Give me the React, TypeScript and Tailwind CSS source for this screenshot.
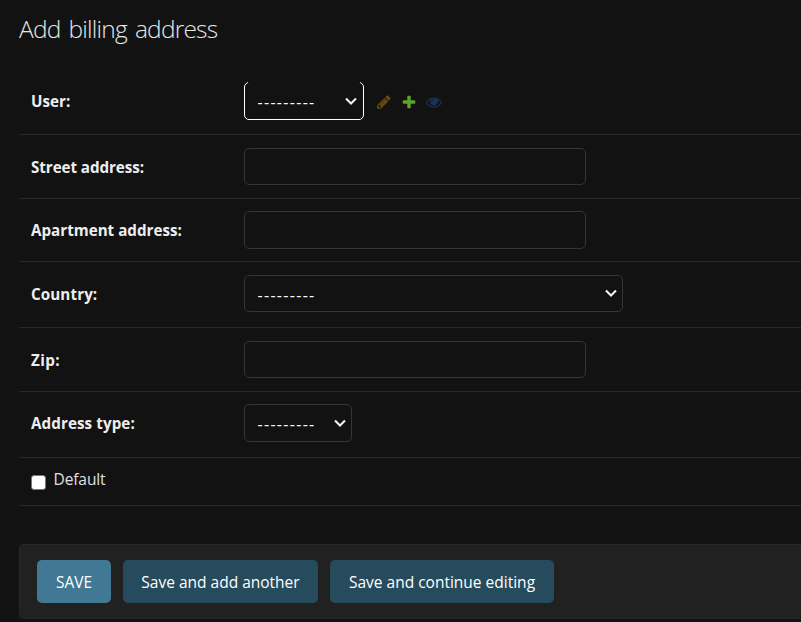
import type { ReactNode } from "react";

function Chevron() {
  return (
    <svg className="h-[9px] w-[14px] shrink-0" viewBox="0 0 14 9" fill="none">
      <path d="M2 1.6 L7 6.6 L12 1.6" stroke="#f2f2f2" strokeWidth="2.1" />
    </svg>
  );
}

function Dashes() {
  return <span className="pt-[2px] text-[16px] leading-5 tracking-[1.3px] text-white">---------</span>;
}

function Select({ className, children }: { className: string; children?: ReactNode }) {
  return (
    <div className={`relative flex items-center justify-between rounded-[5px] border pl-[12.5px] ${className}`}>
      <Dashes />
      <Chevron />
      {children}
    </div>
  );
}

function TextInput({ className }: { className: string }) {
  return <input type="text" className={`w-[342px] rounded-[5px] border border-[#353535] bg-[#121212] outline-none ${className}`} />;
}

function Row({ label, labelClass, className, children }: { label: string; labelClass: string; className: string; children: ReactNode }) {
  return (
    <div className={`flex items-start border-b border-[#282828] pl-3 ${className}`}>
      <label className={`w-[213px] shrink-0 whitespace-nowrap pt-2 text-[15.2px] font-bold leading-[22px] text-[#eeeeee] ${labelClass}`}>{label}</label>
      {children}
    </div>
  );
}

function Icon({ color, d }: { color: string; d: string }) {
  return (
    <svg className={`size-4 ${color}`} viewBox="0 0 1792 1792" fill="currentColor">
      <path d={d} />
    </svg>
  );
}

const PENCIL =
  "M491 1536l91-91-235-235-91 91v107h128v128h107zm523-928q0-22-22-22-10 0-17 7l-542 542q-7 7-7 17 0 22 22 22 10 0 17-7l542-542q7-7 7-17zm-54-192l416 416-832 832h-416v-416zm683 96q0 53-37 90l-166 166-416-416 166-165q36-38 90-38 53 0 91 38l235 234q37 39 37 91z";
const PLUS =
  "M1600 796v192q0 40-28 68t-68 28h-416v416q0 40-28 68t-68 28h-192q-40 0-68-28t-28-68v-416h-416q-40 0-68-28t-28-68v-192q0-40 28-68t68-28h416v-416q0-40 28-68t68-28h192q40 0 68 28t28 68v416h416q40 0 68 28t28 68z";
const EYE =
  "M1664 960q-152-236-381-353 61 104 61 225 0 185-131.5 316.5t-316.5 131.5-316.5-131.5-131.5-316.5q0-121 61-225-229 117-381 353 133 205 333.5 326.5t434.5 121.5 434.5-121.5 333.5-326.5zm-720-384q0-20-14-34t-34-14q-125 0-214.5 89.5t-89.5 214.5q0 20 14 34t34 14 34-14 14-34q0-86 61-147t147-61q20 0 34-14t14-34zm848 384q0 34-20 69-140 230-376.5 368.5t-499.5 138.5-499.5-139-376.5-368q-20-35-20-69t20-69q140-229 376.5-368t499.5-139 499.5 139 376.5 368q20 35 20 69z";

export default function App() {
  return (
    <main className="h-[622px] w-[801px] overflow-hidden bg-[#121212] pl-[19px] font-['Open_Sans','Noto_Sans',sans-serif] text-[#eeeeee]">
      <h1 className="h-[69px] whitespace-nowrap pt-[14px] text-[24.5px] font-light leading-[30px] tracking-[-0.8px] text-[#e6e6e6] [word-spacing:2.5px]">Add billing address</h1>

      <form>
        <Row label="User:" labelClass="mt-[13px]" className="h-[66px] pt-0">
          <div className="flex pt-[13px]">
            <Select className="h-[38px] w-[120px] border-white pr-[5px]">
              <span className="absolute inset-x-[3px] -top-px h-px bg-[#121212]" />
            </Select>
            <div className="ml-3 flex gap-[9px] pt-3">
              <Icon color="text-[#644b12]" d={PENCIL} />
              <Icon color="text-[#5fa225]" d={PLUS} />
              <Icon color="text-[#1a3354]" d={EYE} />
            </div>
          </div>
        </Row>
        <Row label="Street address:" labelClass="tracking-[-0.07px]" className="h-[64px] pt-[13px]">
          <TextInput className="h-[37px]" />
        </Row>
        <Row label="Apartment address:" labelClass="" className="h-[63px] pt-[12px]">
          <TextInput className="h-[38px]" />
        </Row>
        <Row label="Country:" labelClass="tracking-[0.1px]" className="h-[66px] pt-[13px]">
          <Select className="h-[37px] w-[379px] border-[#353535] pr-[4px]" />
        </Row>
        <Row label="Zip:" labelClass="tracking-[0.4px]" className="h-[64px] pt-[13px]">
          <TextInput className="h-[37px]" />
        </Row>
        <Row label="Address type:" labelClass="tracking-[0.08px]" className="h-[66px] pt-[12px]">
          <Select className="h-[38px] w-[108px] border-[#353535] pr-[4px]" />
        </Row>
        <div className="flex h-[48px] items-start border-b border-[#282828] pl-3 pt-[10px]">
          <span className="mt-[7px] size-[15px] rounded-[3px] border border-[#767676] bg-white" />
          <label className="ml-[7.5px] text-[15.5px] leading-[22px] tracking-[-0.1px] text-[#e0e0e0]">Default</label>
        </div>

        <div className="mt-[38px] flex h-[75px] gap-3 rounded-l-[5px] border border-r-0 border-[#282828] bg-[#212121] pl-[17px] pt-[15px] text-[15.5px] text-white">
          <button type="button" className="h-[43px] w-[74px] whitespace-nowrap rounded-[5px] bg-[#417893] pt-[3px]">SAVE</button>
          <button type="button" className="h-[43px] w-[195px] whitespace-nowrap rounded-[5px] bg-[#264b5d] pt-[3px]">Save and add another</button>
          <button type="button" className="h-[43px] w-[224px] whitespace-nowrap rounded-[5px] bg-[#264b5d] pt-[3px]">Save and continue editing</button>
        </div>
      </form>
    </main>
  );
}
